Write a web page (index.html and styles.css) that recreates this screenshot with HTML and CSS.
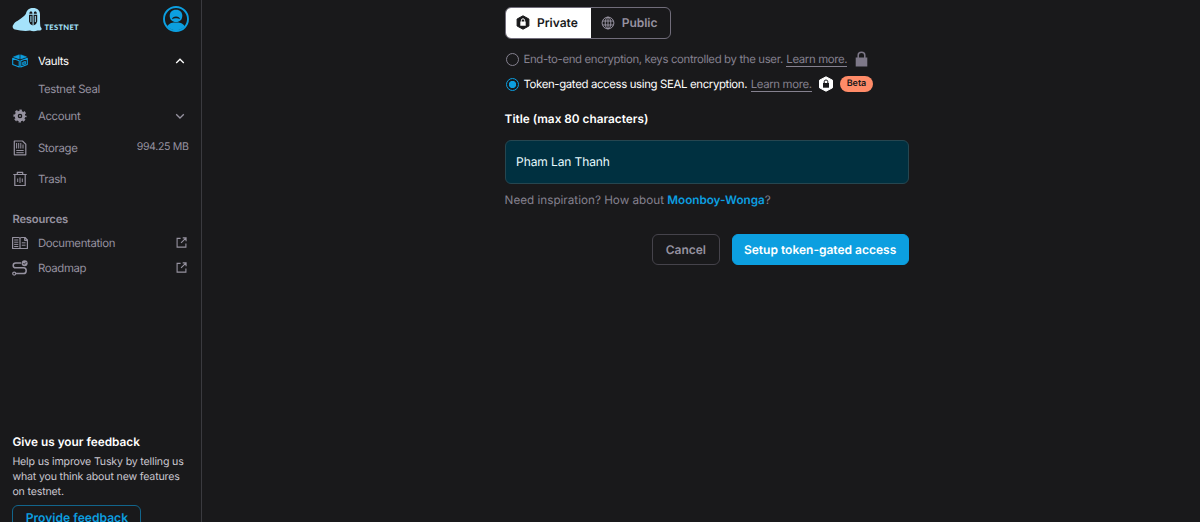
FILE: index.html
```html
<!DOCTYPE html>
<html lang="en">
<head>
  <meta charset="utf-8" />
  <meta name="viewport" content="width=device-width, initial-scale=1.0" />
  <title>Tusky</title>
  <link rel="stylesheet" href="styles.css">
</head>
<body>
  <aside class="sidebar">
    <div class="brand">
      <div class="logo">
        <svg width="30" height="26" viewBox="0 0 30 26">
          <path fill="#a5e3fb" d="M3 23.500C.5 23 0 20 1.500 18.500C3.500 15 7 14.500 9.500 12C12 10 13 9.500 14 7.500C15 3.500 17.500 2 21 2C25.500 2 28 4.500 28 8.500C28 13 28 17 28.300 20C28.500 21.500 30 22 29.700 23.300C29 25 27 24.300 25.500 24.500C23 25.500 20 25.300 18 24.500C13 25.500 8 24.500 3 23.500Z" />
          <path fill="#19191b" d="M17.300 7.800Q17.300 5.600 19 5.200Q20.500 5.500 20.500 7.800ZM21.700 7.800Q21.700 5.500 23.200 5.200Q24.900 5.600 24.900 7.800ZM17 8.700H20.600V19.500Q17.500 18.500 17 15.500ZM21.600 8.700H25.200V15.500Q24.700 18.500 21.600 19.500Z" />
          <path fill="#a5e3fb" d="M18.400 10H19.400V16H18.400ZM22.800 10H23.800V16H22.800Z" />
        </svg>
        <span>TESTNET</span>
      </div>
      <svg class="avatar" width="26" height="26" viewBox="0 0 26 26">
        <circle cx="13" cy="13" r="12" fill="none" stroke="#0c9fe0" stroke-width="1.900" />
        <path fill="#0c9fe0" d="M13 3.700C17 3.700 19.300 6.300 19.300 9.700C19.300 13.500 17 16 13 16C9 16 6.700 13.500 6.700 9.700C6.700 6.300 9 3.700 13 3.700Z" />
        <path fill="#0c9fe0" d="M4.300 20.200C6.500 17 9.500 16.600 13 16.600C16.500 16.600 19.500 17 21.700 20.200C19.500 22.900 16.500 24.300 13 24.300C9.500 24.300 6.500 22.900 4.300 20.200Z" />
        <path fill="#19191b" d="M9 13.300C9.300 11.300 10.700 10.400 13 10.400C15.300 10.400 16.700 11.300 17 13.300C15.500 12.600 14.500 12.300 13 12.300C11.500 12.300 10.500 12.600 9 13.300Z" />
      </svg>
    </div>

    <nav class="nav">
      <a class="nav-item active">
        <svg class="icon" viewBox="0 0 16 16" fill="none" stroke="#0c9fe0" stroke-width="1.100" stroke-linejoin="round">
          <path d="M.700 5.300L7.200 7.700V14L.700 11.500ZM15.300 5.300L8.800 7.700V14L15.300 11.500ZM10.800 9.500L13.300 8.600V10.700L10.800 11.600Z" />
          <path fill="#0c9fe0" stroke-width=".600" d="M1.500 3.900L7.300 1.800V5.900ZM14.500 3.900L8.700 1.800V5.900Z" />
        </svg>
        <span>Vaults</span>
        <svg class="chevron" viewBox="0 0 10 10"><path d="M1.200 7L5 3.200L8.800 7" /></svg>
      </a>
      <a class="nav-item nav-sub"><span>Testnet Seal</span></a>
      <a class="nav-item">
        <svg class="icon" viewBox="0 0 16 16" fill="none" stroke="currentColor">
          <circle cx="8" cy="8" r="3.800" stroke-width="3" />
          <circle cx="8" cy="8" r="5.600" stroke-width="2" stroke-dasharray="2.400 1.998" stroke-dashoffset="1.200" />
          <circle cx="8" cy="8" r=".900" fill="currentColor" stroke="none" />
        </svg>
        <span>Account</span>
        <svg class="chevron" viewBox="0 0 10 10"><path d="M1.200 3.200L5 7L8.800 3.200" /></svg>
      </a>
      <a class="nav-item tall">
        <svg class="icon" viewBox="0 0 16 16" fill="none" stroke="currentColor" stroke-width="1.200">
          <path d="M2.300 1H10.500L13.800 4.200V14.800H2.300Z" stroke-linejoin="round" />
          <path d="M4.600 3V8.500M6.700 3V8.500M8.800 3V8.500M11 4.500V8.500M4.300 10.500H11.700M4.300 12.700H11.700" stroke-width="1" />
        </svg>
        <span>Storage</span>
        <span class="usage">994.25 MB</span>
      </a>
      <a class="nav-item tall">
        <svg class="icon" viewBox="0 0 16 16" fill="none" stroke="currentColor" stroke-width="1.200">
          <path d="M1.300 3.500H14.700M5.300 3.500V1.300H10.700V3.500M2.800 3.500V14.500H13.200V3.500" stroke-linejoin="round" />
          <path d="M5.700 7.500V11M8 6.500V12M10.300 7.500V11" stroke-width="1" />
        </svg>
        <span>Trash</span>
      </a>
    </nav>

    <div class="resources">
      <h2>Resources</h2>
      <a class="nav-item">
        <svg class="icon" viewBox="0 0 16 16" fill="none" stroke="currentColor" stroke-width="1.200">
          <path d="M.600 2.500H6.500Q8 2.500 8 4V13.500H.600ZM8 4Q8 2.500 9.500 2.500H13L15.400 5V13.500H8M12.700 2.500V5.300H15.400" stroke-linejoin="round" />
          <path d="M2.200 5H6.300M2.200 7.200H6.300M2.200 9.400H6.300M2.200 11.500H6.300M9.800 7.800H13.500M9.800 10.200H13.500" stroke-width="1" />
        </svg>
        <span>Documentation</span>
        <svg class="external" viewBox="0 0 12 12"><path d="M5 1.500H1.200V11H10.800V7M7.300 1H11V4.700M11 1L5.500 6.500" /></svg>
      </a>
      <a class="nav-item">
        <svg class="icon" viewBox="0 0 16 16" fill="none" stroke="currentColor" stroke-width="1.500">
          <path d="M9 3H3.700Q1.200 3 1.200 5.400T3.700 7.800H11.500Q14.200 7.800 14.200 10.700T11.500 13.600H4" />
          <circle cx="2.200" cy="13.600" r="1.500" stroke-width="1.200" />
          <circle cx="12.600" cy="3.200" r="3" fill="currentColor" stroke="none" />
          <path d="M11.100 3.200L12.200 4.300L14.200 2.200" stroke="#19191b" stroke-width=".900" />
        </svg>
        <span>Roadmap</span>
        <svg class="external" viewBox="0 0 12 12"><path d="M5 1.500H1.200V11H10.800V7M7.300 1H11V4.700M11 1L5.500 6.500" /></svg>
      </a>
    </div>

    <div class="feedback">
      <h3>Give us your feedback</h3>
      <p>Help us improve Tusky by telling us what you think about new features on testnet.</p>
      <button class="feedback-btn">Provide feedback</button>
    </div>
  </aside>

  <main class="content">
    <form class="vault-form">
      <div class="segmented">
        <button type="button" class="segment selected">
          <svg width="14" height="15" viewBox="0 0 14 15">
            <path fill="#19191b" stroke="#19191b" stroke-linejoin="round" d="M7 .800L12.900 4V11L7 14.200L1.100 11V4Z" />
            <path fill="#fff" d="M4.300 6.500H9.700V10.700H4.300Z" />
            <path fill="none" stroke="#fff" d="M5.400 6.700V5.300Q5.400 3.800 7 3.800T8.600 5.300V6.700" />
          </svg>
          Private
        </button>
        <button type="button" class="segment">
          <svg width="14" height="14" viewBox="0 0 14 14" fill="none" stroke="currentColor">
            <circle cx="7" cy="7" r="5.900" />
            <ellipse cx="7" cy="7" rx="2.800" ry="5.900" />
            <path d="M7 1V13M1.700 5H12.300M1.700 9H12.300" />
          </svg>
          Public
        </button>
      </div>

      <label class="option">
        <span class="radio"></span>
        <span>End-to-end encryption, keys controlled by the user.</span>
        <a>Learn more.</a>
        <svg class="lock" width="13" height="16" viewBox="0 0 13 16">
          <path fill="#7d7888" d="M.700 6.500H12.300V15.500H.700Z" />
          <path fill="none" stroke="#7d7888" stroke-width="1.500" d="M3.200 7V4.200Q3.200 1.200 6.500 1.200T9.800 4.200V7" />
        </svg>
      </label>
      <label class="option checked">
        <span class="radio"></span>
        <span>Token-gated access using SEAL encryption.</span>
        <a>Learn more.</a>
        <svg class="seal" width="16" height="16" viewBox="0 0 16 16">
          <path fill="#fff" stroke="#fff" stroke-linejoin="round" d="M8 .800L14.500 4.200V11.800L8 15.200L1.500 11.800V4.200Z" />
          <path fill="#19191b" d="M5 7H11V11.700H5Z" />
          <path fill="none" stroke="#19191b" d="M6.200 7.200V5.700Q6.200 4 8 4T9.800 5.700V7.200" />
        </svg>
        <span class="badge">Beta</span>
      </label>

      <label class="title-label" for="title">Title (max 80 characters)</label>
      <input class="title-input" id="title" type="text" value="Pham Lan Thanh" />
      <p class="hint">Need inspiration? How about <a>Moonboy-Wonga</a>?</p>

      <div class="actions">
        <button type="button" class="btn">Cancel</button>
        <button type="button" class="btn primary">Setup token-gated access</button>
      </div>
    </form>
  </main>
</body>
</html>
```
FILE: styles.css
```css
:root {
  --color-bg: #19191b;
  --color-border: #3a3a3f;
  --color-text: #ffffff;
  --color-muted: #9692a0;
  --color-dim: #85818f;
  --color-accent: #0c9fe0;
  --radius: 6px;
}

*, *::before, *::after {
  box-sizing: border-box;
  margin: 0;
  padding: 0;
}

body {
  font-family: Inter, sans-serif;
  font-size: 11.4px;
  text-rendering: geometricPrecision;
  background: var(--color-bg);
  color: var(--color-text);
  display: flex;
  height: 100vh;
  overflow: hidden;
}

button,
input {
  font-family: inherit;
  text-rendering: inherit;
}

/* Sidebar */
.sidebar {
  width: 202px;
  flex-shrink: 0;
  height: 100vh;
  padding: 6px 12px 0 12.4px;
  border-right: 1px solid var(--color-border);
  display: flex;
  flex-direction: column;
  overflow: hidden;
}

.brand {
  display: flex;
  justify-content: space-between;
  height: 40px;
}

.logo {
  display: flex;
  align-items: flex-end;
  gap: 2px;
  height: 26px;
}

.logo span {
  font-family: Lato, sans-serif;
  font-size: 7.5px;
  font-weight: 900;
  line-height: 9px;
  letter-spacing: 0.35px;
  color: #a5e3fb;
}

.nav-item {
  display: flex;
  align-items: center;
  height: 25px;
  letter-spacing: -0.36px;
  color: var(--color-muted);
}

.nav-item.tall {
  height: 31.5px;
}

.nav-item.active {
  color: var(--color-text);
  height: 30.5px;
}

.nav-sub {
  padding-left: 25.5px;
}

.nav-sub + .nav-item {
  height: 29px;
  margin-bottom: 1.5px;
}

.icon {
  width: 16px;
  height: 16px;
  margin-right: 9.5px;
}

.chevron,
.external {
  margin-left: auto;
  fill: none;
  stroke: currentColor;
}

.chevron {
  width: 10px;
  height: 10px;
  margin-right: 4px;
  stroke-width: 1.3;
}

.external {
  width: 11px;
  height: 11px;
  margin-right: 2px;
  stroke-width: 1.2;
}

.usage {
  margin-left: auto;
  font-size: 10.6px;
  padding: 0 0.5px 2px 0;
}

.resources {
  margin-top: 14.5px;
}

.resources h2 {
  font-size: 11.2px;
  font-weight: 600;
  line-height: 18px;
  letter-spacing: -0.15px;
  margin-bottom: 2.5px;
  color: var(--color-muted);
}

.feedback {
  margin-top: auto;
  height: 88.4px;
}

.feedback h3 {
  font-size: 11.8px;
  font-weight: 600;
  line-height: 17px;
  margin-bottom: 3px;
}

.feedback p {
  font-size: 10.6px;
  line-height: 15px;
  letter-spacing: -0.16px;
  margin: 0 -4px 6px 0;
  color: #c9c6cf;
}

.feedback-btn {
  width: 129px;
  height: 26px;
  background: none;
  border: 1px solid #12658c;
  border-radius: var(--radius);
  color: var(--color-accent);
  font-size: 12.1px;
  font-weight: 600;
}

/* Vault form */
.content {
  flex: 1;
  padding: 7px 0 0 302.6px;
}

.vault-form {
  width: 404px;
}

.segmented {
  display: flex;
  width: 166.5px;
  height: 31.5px;
  margin-bottom: 8px;
  border: 1px solid #716d7b;
  border-radius: var(--radius);
  overflow: hidden;
}

.segment {
  flex: 1;
  display: flex;
  align-items: center;
  justify-content: center;
  gap: 6.5px;
  padding-right: 2px;
  border: none;
  background: none;
  color: var(--color-muted);
  font-size: 12px;
  font-weight: 600;
}

.segment.selected {
  flex: 0 0 85px;
  background: #fff;
  color: var(--color-bg);
}

.option {
  display: flex;
  align-items: center;
  height: 25px;
  letter-spacing: -0.35px;
  color: var(--color-dim);
  white-space: nowrap;
}

.option.checked {
  color: var(--color-text);
}

.option a {
  margin-left: 3.5px;
  line-height: 14px;
  color: var(--color-dim);
  border-bottom: 1px solid currentColor;
  position: relative;
  top: 0.5px;
}

.radio {
  width: 13px;
  height: 13px;
  margin: 0 4.8px 0 1px;
  border: 1px solid var(--color-dim);
  border-radius: 50%;
}

.checked .radio {
  border-color: var(--color-accent);
  background: radial-gradient(circle, var(--color-accent) 0 3.3px, transparent 4px);
}

.lock {
  margin-left: 7.5px;
}

.seal {
  margin: 0 6px;
}

.badge {
  height: 16px;
  padding: 0 7px;
  border-radius: 8px;
  background: #ff8b68;
  color: var(--color-bg);
  font-size: 9px;
  font-weight: 600;
  line-height: 16.5px;
  letter-spacing: 0;
}

.title-label {
  display: block;
  margin: 14px 0 13.5px;
  font-size: 11.8px;
  font-weight: 600;
  line-height: 16px;
}

.title-input {
  display: block;
  width: 100%;
  height: 44px;
  padding: 0 10.5px 1px;
  background: #003040;
  border: 1px solid #264650;
  border-radius: var(--radius);
  color: #e8fbff;
  font-size: 12px;
  letter-spacing: -0.1px;
  outline: none;
}

.hint {
  margin-top: 8px;
  font-size: 11.7px;
  line-height: 16px;
  color: var(--color-dim);
}

.hint a {
  color: var(--color-accent);
  font-weight: 600;
}

.actions {
  display: flex;
  justify-content: flex-end;
  gap: 12px;
  margin-top: 25.5px;
}

.btn {
  width: 67.5px;
  height: 31.5px;
  background: none;
  border: 1px solid #45434b;
  border-radius: var(--radius);
  color: var(--color-muted);
  font-size: 12px;
  font-weight: 600;
}

.btn.primary {
  width: 177px;
  background: var(--color-accent);
  border-color: var(--color-accent);
  color: #fff;
}
```
